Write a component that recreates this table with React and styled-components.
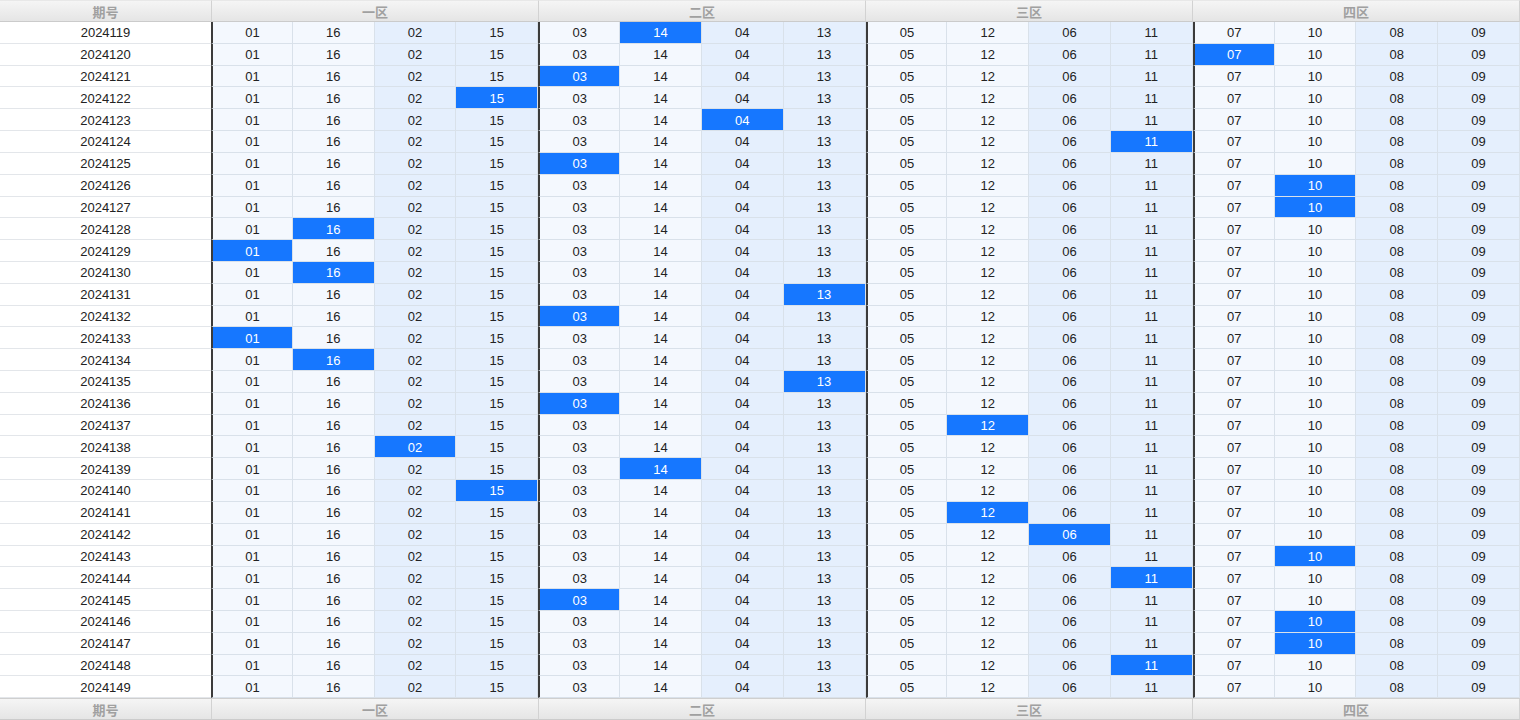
import React from 'react'
import styled, { createGlobalStyle } from 'styled-components'

const GlobalStyle = createGlobalStyle`
  html, body {
    margin: 0;
    padding: 0;
    background: #ffffff;
  }
  body {
    font-family: "Liberation Sans", Arial, "Noto Sans CJK SC", sans-serif;
  }
`

const zones = [
  { name: '一区', nums: ['01', '16', '02', '15'] },
  { name: '二区', nums: ['03', '14', '04', '13'] },
  { name: '三区', nums: ['05', '12', '06', '11'] },
  { name: '四区', nums: ['07', '10', '08', '09'] }
]

// index of the highlighted cell (0-15) per issue, -1 = none
const hits = [
  5, 12, 4, 3, 6, 11, 4, 13, 13, 1, 0, 1, 7, 4, 0, 1,
  7, 4, 9, 2, 5, 3, 9, 10, 13, 11, 4, 13, 13, 11, -1
]

const rows = hits.map((hit, i) => ({ issue: String(2024119 + i), hit }))

const Board = styled.div`
  display: flex;
  flex-direction: column;
  width: 1520px;
  height: 720px;
  overflow: hidden;
`

const HeadRow = styled.div`
  display: grid;
  grid-template-columns: 212px repeat(4, 1fr);
  height: 22px;
  flex: none;
`

const HeadCell = styled.div`
  display: flex;
  align-items: center;
  justify-content: center;
  box-sizing: border-box;
  background: linear-gradient(#f5f5f5, #e5e5e5);
  border-right: 1px solid #d2d2d2;
  border-top: 1px solid ${({ $bottom }) => ($bottom ? '#cfcfcf' : '#e8e8e8')};
  border-bottom: 1px solid #cbcbcb;
  color: #a0a0a0;
  font-family: "Noto Sans CJK SC", sans-serif;
  font-size: 13px;
  font-weight: 700;
  line-height: 1;

  :last-child {
    border-right: none;
  }
`

const BodyRow = styled.div`
  display: grid;
  grid-template-columns: 211px repeat(16, 1fr);
  flex: 1;
  min-height: 0;
`

const IssueCell = styled.div`
  display: flex;
  align-items: center;
  justify-content: center;
  box-sizing: border-box;
  padding-top: 1px;
  background: #ffffff;
  border-bottom: 1px solid #e3e6ea;
  color: #222222;
  font-size: 13px;
`

const NumCell = styled.div`
  display: flex;
  align-items: center;
  justify-content: center;
  box-sizing: border-box;
  padding-top: 1px;
  border-right: 1px solid #d9e1ea;
  border-bottom: 1px solid #d9e1ea;
  border-left: ${({ $zoneStart }) => ($zoneStart ? '2px solid #3b3b3b' : 'none')};
  background: ${({ $hit, $shade }) => ($hit ? '#1677ff' : $shade ? '#e5effd' : '#f4f8fe')};
  color: ${({ $hit }) => ($hit ? '#ffffff' : '#222222')};
  font-size: 13px;
`

const Header = ({ bottom }) => (
  <HeadRow>
    <HeadCell $bottom={bottom}>期号</HeadCell>
    {zones.map((zone) => <HeadCell key={zone.name} $bottom={bottom}>{zone.name}</HeadCell>)}
  </HeadRow>
)

const App = () => (
  <>
    <GlobalStyle />
    <Board>
      <Header />

      {/* one row per issue */}
      {rows.map((row) => <BodyRow key={row.issue}>
        <IssueCell>{row.issue}</IssueCell>
        {zones.map((zone, z) => zone.nums.map((num, n) => {
          const idx = z * 4 + n
          return <NumCell
            key={`${row.issue}-${idx}`}
            $zoneStart={n === 0}
            $shade={n >= 2}
            $hit={row.hit === idx}
          >
            {num}
          </NumCell>
        }))}
      </BodyRow>)}

      <Header bottom />
    </Board>
  </>
)

export default App
